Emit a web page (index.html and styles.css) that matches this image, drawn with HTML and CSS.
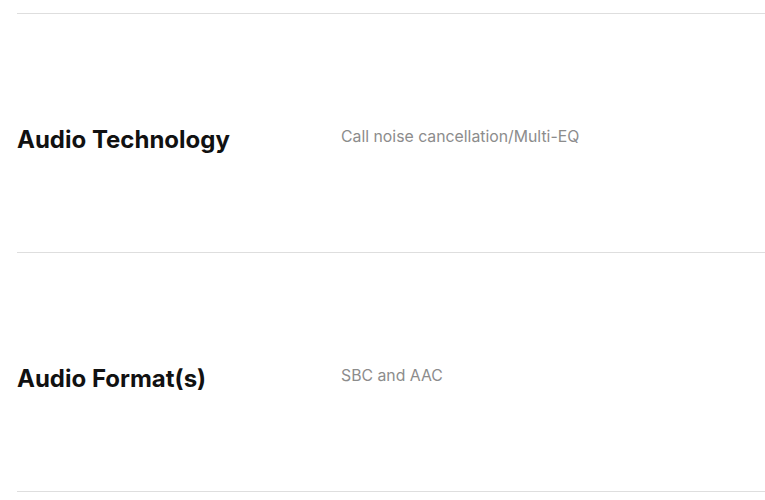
FILE: index.html
```html
<!DOCTYPE html>
<html>
<head>
<meta charset="utf-8">
<link rel="stylesheet" href="styles.css">
</head>
<body>
<div class="specs">
  <div class="row">
    <div class="label">Audio Technology</div>
    <div class="value">Call noise cancellation/Multi-EQ</div>
  </div>
  <div class="row">
    <div class="label">Audio Format(s)</div>
    <div class="value">SBC and AAC</div>
  </div>
</div>
</body>
</html>
```
FILE: styles.css
```css
html, body {
  margin: 0;
  padding: 0;
  background: #fff;
}
body {
  font-family: Inter, "Noto Sans", sans-serif;
  padding-top: 13px;
}
.specs {
  margin-left: 17px;
  border-bottom: 1px solid #dedede;
}
.row {
  border-top: 1px solid #dedede;
  height: 238px;
  display: grid;
  grid-template-columns: 324px 1fr;
  align-items: center;
}
.label {
  font-size: 24px;
  font-weight: 700;
  color: #111;
  padding-top: 12px;
}
.value {
  font-size: 15.8px;
  color: #8c8c8c;
  padding-top: 6px;
}
```
